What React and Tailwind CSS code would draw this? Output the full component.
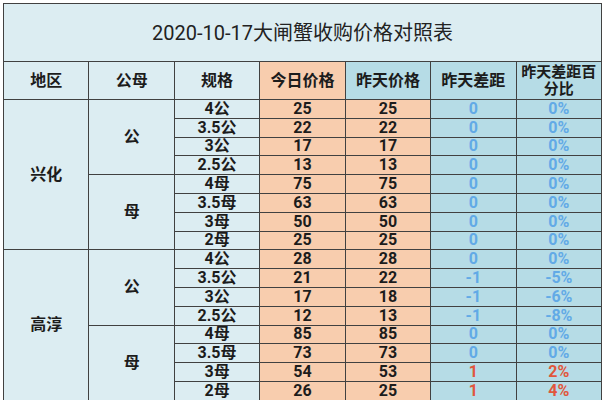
import { Fragment } from 'react'

const rows = [
  { region: '兴化', sex: '公', spec: '4公', today: 25, yest: 25, diff: '0', pct: '0%' },
  { spec: '3.5公', today: 22, yest: 22, diff: '0', pct: '0%' },
  { spec: '3公', today: 17, yest: 17, diff: '0', pct: '0%' },
  { spec: '2.5公', today: 13, yest: 13, diff: '0', pct: '0%' },
  { sex: '母', spec: '4母', today: 75, yest: 75, diff: '0', pct: '0%' },
  { spec: '3.5母', today: 63, yest: 63, diff: '0', pct: '0%' },
  { spec: '3母', today: 50, yest: 50, diff: '0', pct: '0%' },
  { spec: '2母', today: 25, yest: 25, diff: '0', pct: '0%' },
  { region: '高淳', sex: '公', spec: '4公', today: 28, yest: 28, diff: '0', pct: '0%' },
  { spec: '3.5公', today: 21, yest: 22, diff: '-1', pct: '-5%' },
  { spec: '3公', today: 17, yest: 18, diff: '-1', pct: '-6%' },
  { spec: '2.5公', today: 12, yest: 13, diff: '-1', pct: '-8%' },
  { sex: '母', spec: '4母', today: 85, yest: 85, diff: '0', pct: '0%' },
  { spec: '3.5母', today: 73, yest: 73, diff: '0', pct: '0%' },
  { spec: '3母', today: 54, yest: 53, diff: '1', pct: '2%', up: true },
  { spec: '2母', today: 26, yest: 25, diff: '1', pct: '4%', up: true },
]

const cell = 'flex items-center justify-center'

export default function App() {
  return (
    <div className="w-[605px] h-[400px] overflow-hidden bg-white pt-[3px] pl-[3px] font-['Roboto','Noto_Sans_CJK_SC',sans-serif] text-[#1c1c1c]">
      <div className="w-[599px] grid grid-cols-7 grid-rows-[57px_37px_repeat(16,17.8px)] gap-px p-px bg-[#414141]">
        <div className={`${cell} col-span-7 bg-[#dcedf2] text-[20px] text-[#222]`}>
          2020-10-17大闸蟹收购价格对照表
        </div>

        <div className={`${cell} bg-[#dcedf2] text-[16px] font-bold`}>地区</div>
        <div className={`${cell} bg-[#dcedf2] text-[16px] font-bold`}>公母</div>
        <div className={`${cell} bg-[#dcedf2] text-[16px] font-bold`}>规格</div>
        <div className={`${cell} bg-[#f8cdae] text-[16px] font-bold`}>今日价格</div>
        <div className={`${cell} bg-[#b6dce6] text-[16px] font-bold`}>昨天价格</div>
        <div className={`${cell} bg-[#b6dce6] text-[16px] font-bold`}>昨天差距</div>
        <div className={`${cell} bg-[#b6dce6] text-[15px] font-bold text-center leading-[17px]`}>昨天差距百分比</div>

        {rows.map((r, i) => (
          <Fragment key={i}>
            {r.region && (
              <div className={`${cell} row-span-8 bg-[#dcedf2] text-[16px] font-bold`}>{r.region}</div>
            )}
            {r.sex && (
              <div className={`${cell} row-span-4 bg-[#dcedf2] text-[16px] font-bold`}>{r.sex}</div>
            )}
            <div className={`${cell} bg-[#dcedf2] text-[16px] font-bold leading-none`}>{r.spec}</div>
            <div className={`${cell} bg-[#f8cdae] text-[16px] font-bold leading-none`}>{r.today}</div>
            <div className={`${cell} bg-[#f8cdae] text-[16px] font-bold leading-none`}>{r.yest}</div>
            <div className={`${cell} bg-[#b6dce6] text-[16px] font-bold leading-none ${r.up ? 'text-[#e0573d]' : 'text-[#62aae6]'}`}>{r.diff}</div>
            <div className={`${cell} bg-[#b6dce6] text-[16px] font-bold leading-none ${r.up ? 'text-[#e0573d]' : 'text-[#62aae6]'}`}>{r.pct}</div>
          </Fragment>
        ))}
      </div>
    </div>
  )
}
